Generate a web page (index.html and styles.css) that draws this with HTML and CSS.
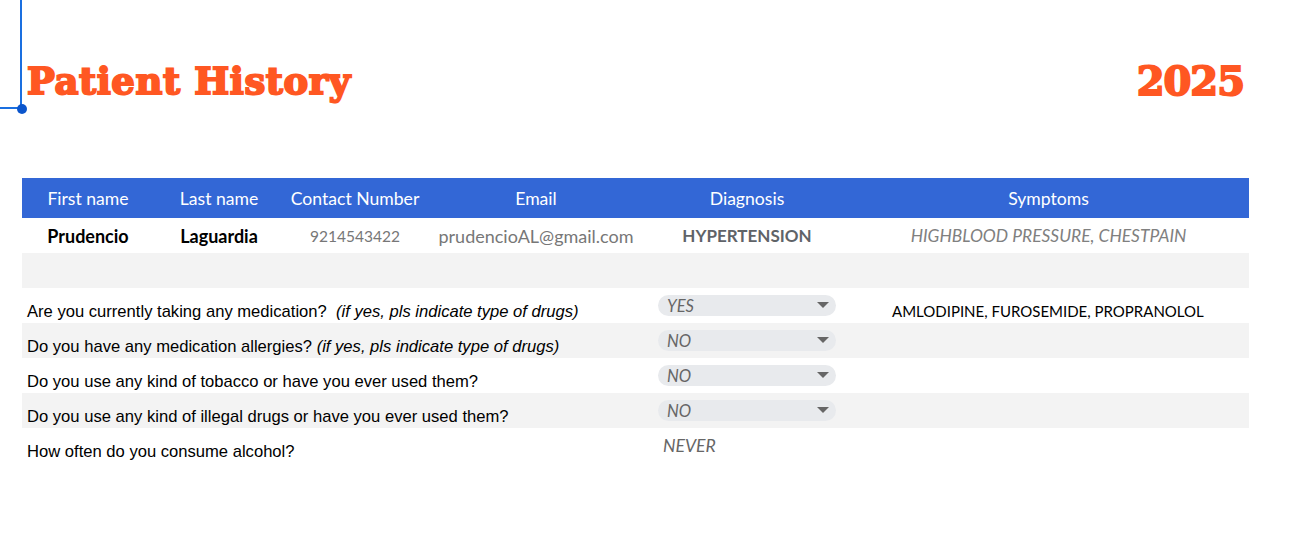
FILE: index.html
```html
<!DOCTYPE html>
<html lang="en">
<head>
<meta charset="utf-8">
<title>Patient History</title>
<link rel="stylesheet" href="styles.css">
</head>
<body>
<div class="decor-v"></div>
<div class="decor-h"></div>
<div class="decor-dot"></div>
<main class="page">
  <header class="title-bar">
    <h1 class="title">Patient History</h1>
    <div class="year">2025</div>
  </header>
  <section class="sheet">
    <div class="row-patient head">
      <div>First name</div><div>Last name</div><div>Contact Number</div><div>Email</div><div>Diagnosis</div><div>Symptoms</div>
    </div>
    <div class="row-patient data">
      <div class="strong">Prudencio</div><div class="strong">Laguardia</div><div class="phone">9214543422</div><div class="email">prudencioAL@gmail.com</div><div class="diag">HYPERTENSION</div><div class="sym">HIGHBLOOD PRESSURE, CHESTPAIN</div>
    </div>
    <div class="spacer alt"></div>
    <div class="q-row">
      <div class="q">Are you currently taking any medication? &nbsp;<em>(if yes, pls indicate type of drugs)</em></div>
      <div class="sel"><span>YES</span><i class="caret"></i></div>
      <div class="ans">AMLODIPINE, FUROSEMIDE, PROPRANOLOL</div>
    </div>
    <div class="q-row alt">
      <div class="q">Do you have any medication allergies? <em>(if yes, pls indicate type of drugs)</em></div>
      <div class="sel"><span>NO</span><i class="caret"></i></div>
      <div class="ans"></div>
    </div>
    <div class="q-row">
      <div class="q">Do you use any kind of tobacco or have you ever used them?</div>
      <div class="sel"><span>NO</span><i class="caret"></i></div>
      <div class="ans"></div>
    </div>
    <div class="q-row alt">
      <div class="q">Do you use any kind of illegal drugs or have you ever used them?</div>
      <div class="sel"><span>NO</span><i class="caret"></i></div>
      <div class="ans"></div>
    </div>
    <div class="q-row">
      <div class="q">How often do you consume alcohol?</div>
      <div class="plain">NEVER</div>
      <div class="ans"></div>
    </div>
  </section>
</main>
</body>
</html>
```
FILE: styles.css
```css
* { box-sizing: border-box; }
html, body { margin: 0; padding: 0; background: #fff; }
body { width: 1291px; height: 533px; overflow: hidden; position: relative; font-family: "Lato", "Liberation Sans", sans-serif; }
.decor-v { position: absolute; left: 20px; top: 0; width: 2px; height: 108px; background: #1a6fe0; }
.decor-h { position: absolute; left: 0; top: 107px; width: 20px; height: 2px; background: #1a6fe0; }
.decor-dot { position: absolute; left: 17px; top: 104px; width: 10px; height: 10px; border-radius: 50%; background: #0b55cc; }
.page { padding: 0 42px 0 22px; }
.title-bar { height: 178px; display: flex; justify-content: space-between; align-items: flex-start; padding: 58px 5px 0 5px; }
.title { margin: 0; font: 700 37px/46px "DejaVu Serif", serif; color: #ff5722; -webkit-text-stroke: 2px #ff5722; letter-spacing: 0.6px; white-space: nowrap; }
.year { font: 700 40px/46px "DejaVu Serif", serif; color: #ff5722; -webkit-text-stroke: 2px #ff5722; letter-spacing: -1px; }
.row-patient { display: grid; grid-template-columns: 132px 130px 142px 220px 202px 401px; text-align: center; align-items: center; }
.head { height: 40px; background: #3367d6; color: #fff; font-size: 17.6px; }
.data { height: 35px; color: #777; font-size: 18px; }
.strong { color: #000; font-weight: 700; }
.phone { font-size: 15.5px; }
.diag { font-size: 17px; font-weight: 700; color: #5f6368; }
.sym { font-size: 17.4px; font-style: italic; color: #808080; }
.spacer { height: 35px; }
.alt { background: #f3f3f3; }
.q-row { height: 35px; display: grid; grid-template-columns: 624px 202px 401px; }
.q { font: 16.6px/19px "Liberation Sans", sans-serif; color: #000; padding: 14px 0 0 5px; white-space: nowrap; }
.sel { margin: 7px 12px 0; width: 178px; height: 21px; border-radius: 11px; background: #e8eaed; color: #666; font-size: 16.6px; font-style: italic; display: flex; justify-content: space-between; align-items: center; padding: 0 6px 0 9px; }
.caret { width: 0; height: 0; border-left: 6px solid transparent; border-right: 6px solid transparent; border-top: 6px solid #666; margin-top: -2px; margin-right: 1px; }
.plain { padding: 8px 0 0 17px; font-size: 17.6px; line-height: 20px; font-style: italic; color: #666; }
.ans { padding: 14px 0 0 44px; font-size: 15px; line-height: 19px; color: #000; white-space: nowrap; }
```
